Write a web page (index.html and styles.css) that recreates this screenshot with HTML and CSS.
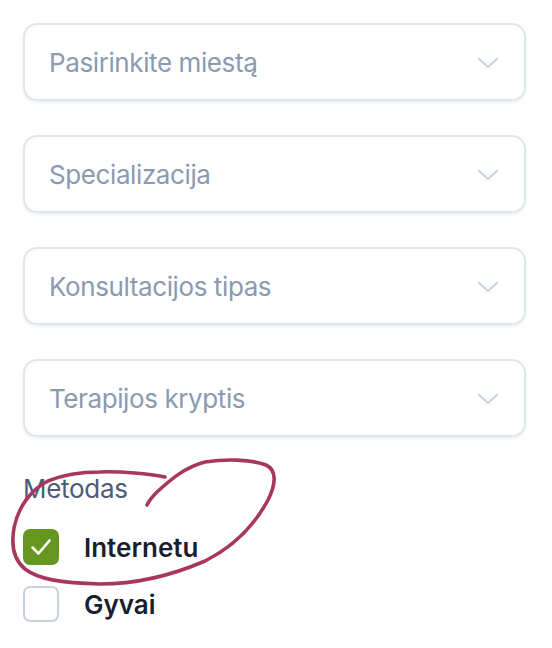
FILE: index.html
```html
<!DOCTYPE html>
<html lang="lt">
<head>
<meta charset="utf-8">
<link rel="stylesheet" href="styles.css">
</head>
<body>
<div class="filters">
  <div class="select"><span>Pasirinkite miestą</span><svg class="chev" viewBox="0 0 20 10" width="20" height="10"><path d="M1 1 L10 9 L19 1" fill="none" stroke="#cbd3df" stroke-width="2.2" stroke-linecap="round" stroke-linejoin="round"/></svg></div>
  <div class="select"><span>Specializacija</span><svg class="chev" viewBox="0 0 20 10" width="20" height="10"><path d="M1 1 L10 9 L19 1" fill="none" stroke="#cbd3df" stroke-width="2.2" stroke-linecap="round" stroke-linejoin="round"/></svg></div>
  <div class="select"><span>Konsultacijos tipas</span><svg class="chev" viewBox="0 0 20 10" width="20" height="10"><path d="M1 1 L10 9 L19 1" fill="none" stroke="#cbd3df" stroke-width="2.2" stroke-linecap="round" stroke-linejoin="round"/></svg></div>
  <div class="select"><span>Terapijos kryptis</span><svg class="chev" viewBox="0 0 20 10" width="20" height="10"><path d="M1 1 L10 9 L19 1" fill="none" stroke="#cbd3df" stroke-width="2.2" stroke-linecap="round" stroke-linejoin="round"/></svg></div>

  <div class="method">
    <div class="label">Metodas</div>
    <div class="option">
      <span class="box checked"><svg viewBox="0 0 22 22" width="22" height="22"><path d="M2.5 11.5 L8.5 17.5 L19.5 4.5" fill="none" stroke="#fff" stroke-width="2.6" stroke-linecap="round" stroke-linejoin="round"/></svg></span>
      <span class="opt-text">Internetu</span>
    </div>
    <div class="option">
      <span class="box"></span>
      <span class="opt-text">Gyvai</span>
    </div>
  </div>
</div>
<svg class="scribble" width="552" height="648" viewBox="0 0 552 648">
  <path d="M165 477 C150 474 120 471 100 472 C80 472 60 476 48 481 C30 490 18 508 14 528 C11 545 14 560 25 569 C38 579 60 583 100 584 C140 584 175 574 205 561 C235 546 255 524 268 500 C276 484 277 470 266 465 C250 459 225 459 205 462 C185 467 170 480 157 492 C152 497 149 501 147 505" fill="none" stroke="#a7375c" stroke-width="3.6" stroke-linecap="round" stroke-linejoin="round"/>
</svg>
</body>
</html>
```
FILE: styles.css
```css
* { box-sizing: border-box; }
html, body { margin: 0; padding: 0; background: #fff; }
body {
  width: 552px;
  height: 648px;
  position: relative;
  overflow: hidden;
  font-family: Inter, "Noto Sans", sans-serif;
}
.filters {
  padding: 23px 26px 0 23px;
  display: flex;
  flex-direction: column;
}
.select {
  height: 78px;
  border: 2px solid #e0e6ee;
  border-radius: 14px;
  box-shadow: 0 2px 3px rgba(30, 50, 90, 0.08);
  display: flex;
  align-items: center;
  justify-content: space-between;
  padding: 0 26px 0 24px;
  margin-bottom: 34px;
}
.select span {
  font-size: 26px;
  color: #8b9ab1;
  letter-spacing: -0.4px;
}
.chev { display: block; margin-top: 2px; }
.method { margin-top: 2px; }
.label {
  font-size: 26px;
  color: #4c5c77;
  line-height: 32px;
  letter-spacing: -0.3px;
  margin-bottom: 24px;
}
.option {
  display: flex;
  align-items: center;
  height: 36px;
  margin-bottom: 21px;
}
.box {
  width: 36px;
  height: 36px;
  border-radius: 7px;
  border: 2px solid #c8d2df;
  display: flex;
  align-items: center;
  justify-content: center;
  flex: none;
}
.box.checked {
  background: #66961f;
  border-color: #66961f;
}
.box svg { display: block; }
.opt-text {
  margin-left: 25px;
  font-size: 26px;
  font-weight: 600;
  color: #18202e;
}
.scribble {
  position: absolute;
  left: 0;
  top: 0;
  pointer-events: none;
}
```
